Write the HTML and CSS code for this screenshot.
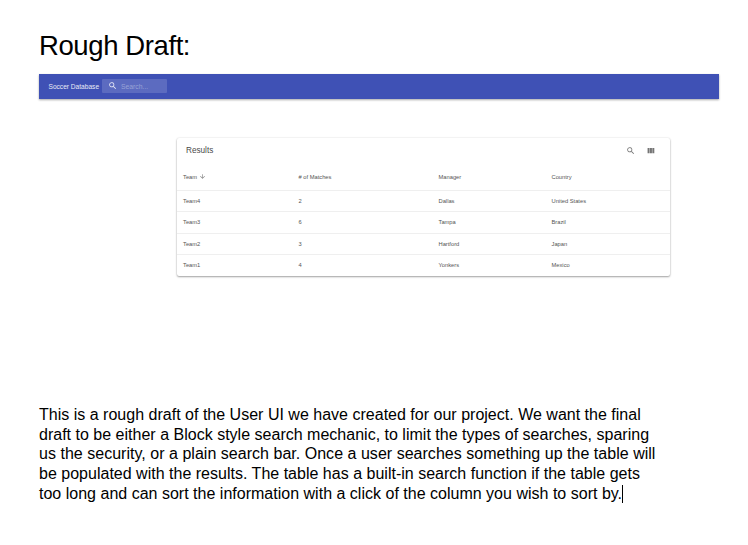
FILE: index.html
```html
<!DOCTYPE html>
<html lang="en">
<head>
<meta charset="utf-8">
<title>Rough Draft</title>
<link rel="stylesheet" href="styles.css">
</head>
<body>
<h1>Rough Draft:</h1>
<section class="app">
  <header class="bar">
    <span class="brand">Soccer Database</span>
    <div class="search">
      <svg class="icon" viewBox="0 0 24 24"><path d="M15.5 14h-.79l-.28-.27A6.5 6.5 0 1 0 13.73 14.43l.27.28v.79l5 4.99L20.49 19l-4.99-5zm-6 0a4.5 4.5 0 1 1 0-9 4.5 4.5 0 0 1 0 9z"/></svg>
      <span>Search...</span>
    </div>
  </header>
  <div class="card">
    <div class="toolbar">
      <h2>Results</h2>
      <svg class="icon" viewBox="0 0 24 24"><path d="M15.5 14h-.79l-.28-.27A6.5 6.5 0 1 0 13.73 14.43l.27.28v.79l5 4.99L20.49 19l-4.99-5zm-6 0a4.5 4.5 0 1 1 0-9 4.5 4.5 0 0 1 0 9z"/></svg>
      <svg class="icon" viewBox="0 0 24 24"><path d="M10 18h5V5h-5v13zm-6 0h5V5H4v13zM16 5v13h5V5h-5z"/></svg>
    </div>
    <div class="row head"><span>Team <svg class="arrow" viewBox="0 0 24 24"><path d="M20 12l-1.41-1.41L13 16.17V4h-2v12.17l-5.58-5.59L4 12l8 8 8-8z"/></svg></span><span># of Matches</span><span>Manager</span><span>Country</span></div>
    <div class="row"><span>Team4</span><span>2</span><span>Dallas</span><span>United States</span></div>
    <div class="row"><span>Team3</span><span>6</span><span>Tampa</span><span>Brazil</span></div>
    <div class="row"><span>Team2</span><span>3</span><span>Hartford</span><span>Japan</span></div>
    <div class="row"><span>Team1</span><span>4</span><span>Yonkers</span><span>Mexico</span></div>
  </div>
</section>
<p class="note">This is a rough draft of the User UI we have created for our project. We want the final<br>draft to be either a Block style search mechanic, to limit the types of searches, sparing<br><span class="wide">us the security, or a plain search bar. Once a user searches something up the table will</span><br>be populated with the results. The table has a built-in search function if the table gets<br>too long and can sort the information with a click of the column you wish to sort by.<span class="caret"></span></p>
</body>
</html>
```
FILE: styles.css
```css
* { box-sizing: border-box; }
body {
  margin: 0;
  padding: 28px 0 0 39px;
  width: 748px;
  height: 545px;
  overflow: hidden;
  background: #fff;
  color: #000;
  font-family: "Liberation Sans", Arial, sans-serif;
}
h1 { margin: 0; height: 46px; font-size: 27.5px; line-height: 35px; font-weight: 400; letter-spacing: -.4px; }
.app { width: 680px; height: 331px; }
.bar {
  display: flex;
  align-items: center;
  height: 25px;
  padding: 0 0 1px 9.5px;
  background: #3f51b5;
  color: #e8eaf6;
  font-size: 6.6px;
  box-shadow: 0 1px 2px rgba(0,0,0,.35);
}
.brand { width: 53.5px; white-space: nowrap; }
.search {
  display: flex;
  align-items: center;
  gap: 3.5px;
  width: 65px;
  height: 14px;
  padding-left: 6px;
  border-radius: 1px;
  background: #5c6bc0;
}
.search span { color: #98a2d6; font-size: 6.8px; }
.icon { width: 9.5px; height: 9.5px; fill: currentColor; }
.card {
  width: 493px;
  height: 138px;
  margin: 39px 0 0 137.5px;
  border-radius: 2px;
  box-shadow: 0 1px 2px rgba(0,0,0,.35), 0 0 2px rgba(0,0,0,.12);
}
.toolbar { display: flex; align-items: center; height: 25px; padding: 0 14.5px 0 9.5px; color: #757575; }
h2 { flex: 1; margin: 0; color: #4a4a4a; font-size: 8.2px; font-weight: 400; }
.toolbar .icon + .icon { margin-left: 10px; }
.row {
  display: grid;
  grid-template-columns: 115.5px 140px 113px 1fr;
  align-items: center;
  height: 21.3px;
  padding-left: 6.5px;
  border-top: 1px solid #efefef;
  color: #555;
  font-size: 5.75px;
}
.head { height: 27px; border-top: 0; }
.arrow { width: 7px; height: 7px; fill: #757575; vertical-align: -1px; }
.note { margin: 0; font-size: 16px; line-height: 19.7px; white-space: nowrap; letter-spacing: .01px; }
.wide { letter-spacing: .025px; }
.caret { display: inline-block; width: 1px; height: 18px; background: #000; vertical-align: -4px; }
```
